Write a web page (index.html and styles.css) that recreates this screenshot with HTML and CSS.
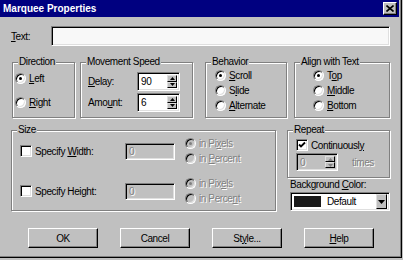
FILE: index.html
```html
<!DOCTYPE html>
<html lang="en">

<head>
    <meta charset="UTF-8" />
    <title>Marquee Properties</title>
    <link rel="stylesheet" href="styles.css">
</head>

<body>
    <div class="window">
        <div class="titlebar">
            <span class="title">Marquee Properties</span>
            <span class="close">
                <svg width="8" height="7" viewBox="0 0 8 7"><path d="M0.5 0.5L7.5 6.5M7.5 0.5L0.5 6.5" stroke="#000" stroke-width="1.6" /></svg>
            </span>
        </div>

        <div class="content">

            <!-- text -->
            <div class="text-row">
                <span class="text-label"><u>T</u>ext:</span>
                <div class="field text-input"></div>
            </div>

            <!-- first row of groups -->
            <div class="row1">
                <div class="group direction">
                    <span class="legend">Direction</span>
                    <div class="opt"><span class="radio checked"></span><span><u>L</u>eft</span></div>
                    <div class="opt"><span class="radio"></span><span><u>R</u>ight</span></div>
                </div>

                <div class="group speed">
                    <span class="legend">Movement Speed</span>
                    <div class="spin-row">
                        <span class="spin-label"><u>D</u>elay:</span>
                        <div class="field spin">
                            <span class="spin-value">90</span>
                            <div class="spin-btns">
                                <span class="spin-btn"><svg width="5" height="3"><path d="M0 3h5L2.5 0z" /></svg></span>
                                <span class="spin-btn"><svg width="5" height="3"><path d="M0 0h5L2.5 3z" /></svg></span>
                            </div>
                        </div>
                    </div>
                    <div class="spin-row">
                        <span class="spin-label">Amo<u>u</u>nt:</span>
                        <div class="field spin">
                            <span class="spin-value">6</span>
                            <div class="spin-btns">
                                <span class="spin-btn"><svg width="5" height="3"><path d="M0 3h5L2.5 0z" /></svg></span>
                                <span class="spin-btn"><svg width="5" height="3"><path d="M0 0h5L2.5 3z" /></svg></span>
                            </div>
                        </div>
                    </div>
                </div>

                <div class="group behavior">
                    <span class="legend">Behavior</span>
                    <div class="opt small"><span class="radio checked"></span><span><u>S</u>croll</span></div>
                    <div class="opt small"><span class="radio"></span><span>S<u>l</u>ide</span></div>
                    <div class="opt small"><span class="radio"></span><span><u>A</u>lternate</span></div>
                </div>

                <div class="group align">
                    <span class="legend">Align with Text</span>
                    <div class="opt small"><span class="radio checked"></span><span>T<u>o</u>p</span></div>
                    <div class="opt small"><span class="radio"></span><span><u>M</u>iddle</span></div>
                    <div class="opt small"><span class="radio"></span><span><u>B</u>ottom</span></div>
                </div>
            </div>

            <!-- second row -->
            <div class="row2">
                <div class="group size">
                    <span class="legend">Size</span>
                    <div class="size-row">
                        <div class="check-label"><span class="check"></span><span>Specify <u>W</u>idth:</span></div>
                        <div class="field off-box">0</div>
                        <div class="units">
                            <div class="opt small off"><span class="radio checked off-radio"></span><span>in Pi<u>x</u>els</span></div>
                            <div class="opt small off"><span class="radio off-radio"></span><span>in <u>P</u>ercent</span></div>
                        </div>
                    </div>
                    <div class="size-row second">
                        <div class="check-label"><span class="check"></span><span>Specify Hei<u>g</u>ht:</span></div>
                        <div class="field off-box">0</div>
                        <div class="units">
                            <div class="opt small off"><span class="radio checked off-radio"></span><span>in Pix<u>e</u>ls</span></div>
                            <div class="opt small off"><span class="radio off-radio"></span><span>in Perce<u>n</u>t</span></div>
                        </div>
                    </div>
                </div>

                <div class="right-col">
                    <div class="group repeat">
                        <span class="legend">Repeat</span>
                        <div class="check-label cont">
                            <span class="check">
                                <svg width="8" height="8" viewBox="0 0 8 8"><path d="M1 3.5L3 5.5L7 1.5" fill="none" stroke="#000" stroke-width="1.8" /></svg>
                            </span>
                            <span>Continuousl<u>y</u></span>
                        </div>
                        <div class="times-row">
                            <div class="field spin off-spin">
                                <span class="spin-value">0</span>
                                <div class="spin-btns">
                                    <span class="spin-btn"><svg width="5" height="3"><path d="M0 3h5L2.5 0z" fill="#808080" /></svg></span>
                                    <span class="spin-btn"><svg width="5" height="3"><path d="M0 0h5L2.5 3z" fill="#808080" /></svg></span>
                                </div>
                            </div>
                            <span class="times">times</span>
                        </div>
                    </div>
                    <div class="bg-label">Background <u>C</u>olor:</div>
                    <div class="field combo">
                        <span class="swatch"></span>
                        <span class="combo-text">Default</span>
                        <span class="combo-btn"><svg width="7" height="4"><path d="M0 0h7L3.5 4z" /></svg></span>
                    </div>
                </div>
            </div>

            <!-- buttons -->
            <div class="buttons">
                <button>OK</button>
                <button>Cancel</button>
                <button>St<u>y</u>le...</button>
                <button><u>H</u>elp</button>
            </div>

        </div>
    </div>
</body>

</html>
```

FILE: styles.css
```css
* {
    box-sizing: border-box;
}

body {
    margin: 0;
    font-family: "Liberation Sans", Arial, sans-serif;
    font-size: 10px;
    letter-spacing: -0.4px;
    color: #000;
    background: #c0c0c0;
}

.window {
    width: 402px;
    height: 258px;
    background: #c0c0c0;
    border-right: 1px solid #000;
    border-bottom: 1px solid #000;
    box-shadow: inset -1px -1px #808080;
}

.titlebar {
    height: 17px;
    margin-right: 2px;
    padding: 0 2px 0 3px;
    background: #000080;
    color: #fff;
    font-weight: bold;
    letter-spacing: 0;
    display: flex;
    align-items: center;
    justify-content: space-between;
}

.close {
    width: 14px;
    height: 13px;
    background: #c0c0c0;
    border: 1px solid;
    border-color: #fff #000 #000 #fff;
    box-shadow: inset -1px -1px #808080;
    display: flex;
    align-items: center;
    justify-content: center;
}

.content {
    padding: 0 11px;
}

/* sunken fields */
.field {
    background: #fff;
    border: 1px solid;
    border-color: #808080 #fff #fff #808080;
    box-shadow: inset 1px 1px #000, inset -1px -1px #dfdfdf;
}

.text-row {
    margin-top: 9px;
    height: 20px;
    display: flex;
    align-items: center;
}

.text-label {
    width: 40px;
}

.text-input {
    flex: 1;
    height: 20px;
    background: #f8f8f8;
}

/* group boxes */
.group {
    position: relative;
    border: 1px solid #808080;
    box-shadow: inset 1px 1px #fff, 1px 1px #fff;
}

.legend {
    position: absolute;
    top: -7px;
    left: 5px;
    padding: 0 1px;
    line-height: 12px;
    background: #c0c0c0;
}

.row1 {
    margin-top: 16px;
    height: 56px;
    display: flex;
}

.opt {
    height: 16px;
    display: flex;
    align-items: center;
    gap: 3px;
}

.opt.small {
    height: 15px;
}

.radio {
    position: relative;
    width: 11px;
    height: 11px;
    border-radius: 50%;
    background: #fff;
    border: 1px solid;
    border-color: #808080 #fff #fff #808080;
    box-shadow: inset 1px 1px #000, inset -1px -1px #dfdfdf;
}

.radio.checked::after {
    content: "";
    position: absolute;
    left: 3px;
    top: 3px;
    width: 3px;
    height: 3px;
    border-radius: 50%;
    background: #000;
}

.off {
    color: #808080;
    text-shadow: 1px 1px #fff;
}

.off-radio {
    background: #c0c0c0;
}

.off-radio.checked::after {
    background: #808080;
}

.direction {
    width: 63px;
    margin-left: 1px;
    padding: 7px 0 0 2px;
    display: flex;
    flex-direction: column;
    gap: 8px;
}

.speed {
    width: 113px;
    margin-left: 5px;
    padding: 9px 0 0 7px;
    display: flex;
    flex-direction: column;
    gap: 2px;
}

.spin-row {
    height: 19px;
    display: flex;
    align-items: center;
}

.spin-label {
    width: 49px;
}

.spin {
    width: 43px;
    height: 19px;
    display: flex;
    padding: 2px;
}

.spin-value {
    padding-left: 1px;
    line-height: 13px;
}

.spin-btns {
    margin-left: auto;
    width: 10px;
    display: flex;
    flex-direction: column;
}

.spin-btn {
    flex: 1;
    background: #c0c0c0;
    border: 1px solid;
    border-color: #dfdfdf #000 #000 #dfdfdf;
    display: flex;
    align-items: center;
    justify-content: center;
}

.behavior {
    width: 82px;
    margin-left: 12px;
    padding: 5px 0 0 9px;
}

.align {
    width: 96px;
    margin-left: 7px;
    padding: 5px 0 0 18px;
}

/* size and repeat */
.row2 {
    margin-top: 12px;
    height: 81px;
    display: flex;
}

.size {
    width: 265px;
    padding: 5px 0 0 8px;
}

.size-row {
    height: 30px;
    display: flex;
    align-items: center;
}

.size-row.second {
    margin-top: 10px;
}

.check-label {
    width: 105px;
    display: flex;
    align-items: center;
    gap: 3px;
}

.check {
    width: 12px;
    height: 12px;
    background: #fff;
    border: 1px solid;
    border-color: #808080 #fff #fff #808080;
    box-shadow: inset 1px 1px #000, inset -1px -1px #dfdfdf;
    display: flex;
    align-items: center;
    justify-content: center;
}

.off-box {
    width: 50px;
    height: 17px;
    padding: 2px 3px;
    background: #c0c0c0;
    color: #808080;
    text-shadow: 1px 1px #fff;
}

.units {
    margin-left: 10px;
    display: flex;
    flex-direction: column;
}

.right-col {
    width: 103px;
    margin-left: 11px;
}

.repeat {
    height: 48px;
    padding: 7px 0 0 8px;
}

.cont {
    height: 14px;
}

.times-row {
    margin-top: 1px;
    display: flex;
    align-items: center;
}

.off-spin {
    width: 42px;
    height: 18px;
    background: #c0c0c0;
    color: #808080;
    text-shadow: 1px 1px #fff;
}

.times {
    margin-left: 14px;
    color: #808080;
    text-shadow: 1px 1px #fff;
}

.bg-label {
    height: 14px;
    line-height: 14px;
    padding-left: 3px;
}

.combo {
    margin-left: 3px;
    width: 100px;
    height: 19px;
    padding: 2px;
    display: flex;
    align-items: center;
}

.swatch {
    width: 27px;
    height: 11px;
    margin-left: 1px;
    background: #1a1a1a;
}

.combo-text {
    padding-left: 6px;
}

.combo-btn {
    margin-left: auto;
    width: 11px;
    height: 15px;
    background: #c0c0c0;
    border: 1px solid;
    border-color: #dfdfdf #000 #000 #dfdfdf;
    display: flex;
    align-items: center;
    justify-content: center;
}

/* buttons */
.buttons {
    margin-top: 17px;
    padding-left: 17px;
    display: flex;
    gap: 22px;
}

button {
    width: 70px;
    height: 20px;
    padding: 0;
    font-family: inherit;
    font-size: 10px;
    letter-spacing: -0.4px;
    color: #000;
    background: #c0c0c0;
    border: 1px solid;
    border-color: #fff #000 #000 #fff;
    box-shadow: inset -1px -1px #808080;
}
```
